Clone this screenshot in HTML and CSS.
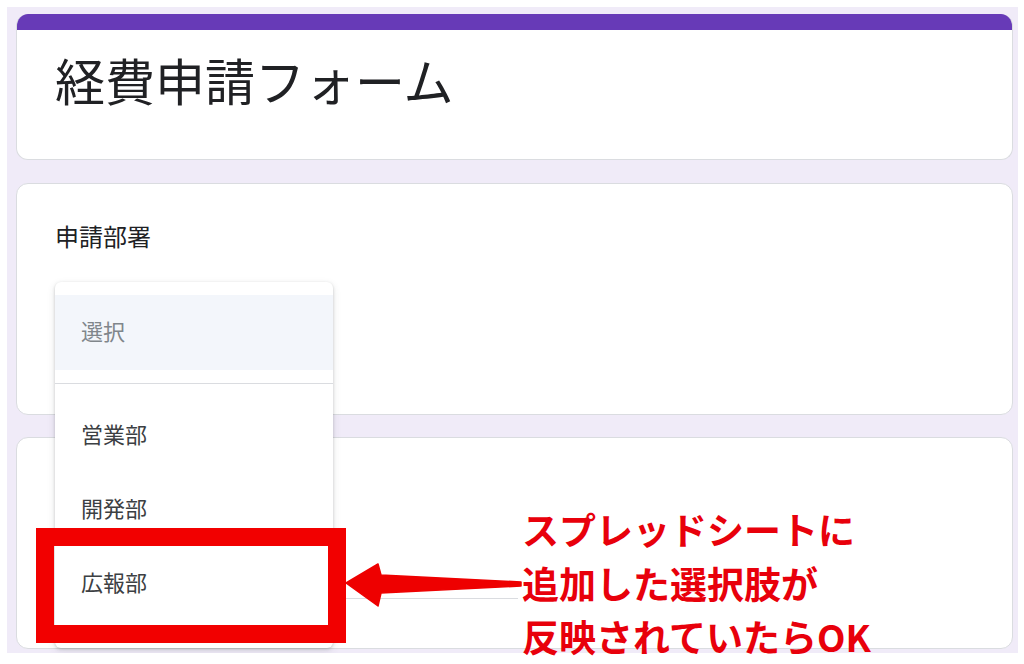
FILE: index.html
```html
<!DOCTYPE html>
<html lang="ja">
<head>
<meta charset="utf-8">
<title>経費申請フォーム</title>
<link rel="stylesheet" href="styles.css">
</head>
<body>
<div class="frame">
  <div class="card card-head">
    <div class="head-bar"></div>
    <h1 class="form-title">経費申請フォーム</h1>
  </div>
  <div class="card card-q">
    <div class="q-title">申請部署</div>
    <div class="menu">
      <div class="menu-sel">選択</div>
      <div class="menu-divider"></div>
      <div class="menu-item">営業部</div>
      <div class="menu-item">開発部</div>
      <div class="menu-item">広報部</div>
    </div>
  </div>
  <div class="card card-q3">
    <div class="input-line"></div>
  </div>
</div>
<div class="hl-box"></div>
<svg class="arrow" viewBox="340 560 185 50" width="185" height="50">
  <polygon points="346,583 378,564 381,575 521,582 521,586 381,593 378,606" fill="#ee0000" stroke="#ee0000" stroke-width="1.5" stroke-linejoin="round"/>
</svg>
<div class="note">スプレッドシートに<br>追加した選択肢が<br>反映されていたらOK</div>
</body>
</html>
```

FILE: styles.css
```css
html, body {
  margin: 0;
  padding: 0;
  background: #ffffff;
}
body {
  position: relative;
  width: 1024px;
  height: 664px;
  overflow: hidden;
  font-family: "Noto Sans CJK JP", "Noto Sans", sans-serif;
  color: #202124;
}
.frame {
  margin: 7px 0 0 7px;
  width: 1011px;
  height: 646px;
  box-sizing: border-box;
  padding: 7px 0 0 9px;
  background: #f0ebf8;
  display: flex;
  flex-direction: column;
  overflow: hidden;
}
.card {
  width: 997px;
  box-sizing: border-box;
  background: #ffffff;
  border: 1px solid #dadce0;
  border-radius: 12px;
  flex: none;
}
.card-head {
  height: 146px;
  overflow: hidden;
  border-top: none;
  margin-bottom: 23px;
}
.head-bar {
  height: 16px;
  background: #673ab7;
}
.form-title {
  margin: 24px 0 0 38px;
  font-size: 50px;
  line-height: 50px;
  font-weight: 400;
  letter-spacing: 0;
  color: #202124;
}
.card-q {
  height: 232px;
  position: relative;
  z-index: 2;
  margin-bottom: 22px;
}
.q-title {
  margin: 40px 0 0 38px;
  font-size: 24px;
  line-height: 24px;
  color: #202124;
}
.menu {
  position: absolute;
  left: 38px;
  top: 98px;
  width: 278px;
  height: 366px;
  box-sizing: border-box;
  padding-top: 13px;
  background: #ffffff;
  border-radius: 6px;
  box-shadow: 0 1px 3px rgba(60, 64, 67, 0.25), 0 3px 8px rgba(60, 64, 67, 0.12);
}
.menu-sel {
  height: 75px;
  box-sizing: border-box;
  padding: 0 0 5px 26px;
  display: flex;
  align-items: center;
  background: #f3f6fb;
  font-size: 22px;
  color: #80868b;
}
.menu-divider {
  margin-top: 13px;
  height: 1px;
  background: #dadce0;
  margin-bottom: 14px;
}
.menu-item {
  height: 74px;
  box-sizing: border-box;
  padding: 0 0 4px 26px;
  display: flex;
  align-items: center;
  font-size: 22px;
  color: #3c4043;
}
.card-q3 {
  height: 212px;
}
.input-line {
  margin: 160px 0 0 38px;
  width: 463px;
  height: 0;
  border-bottom: 1px solid #dadce0;
}
.hl-box {
  position: absolute;
  left: 36px;
  top: 528px;
  width: 310px;
  height: 115px;
  box-sizing: border-box;
  border: 18px solid #f20000;
  z-index: 5;
}
.arrow {
  position: absolute;
  left: 340px;
  top: 560px;
  z-index: 5;
}
.note {
  position: absolute;
  left: 522px;
  top: 503px;
  font-size: 37px;
  line-height: 53.5px;
  font-weight: 700;
  color: #e8000b;
  white-space: nowrap;
  z-index: 5;
}
```
